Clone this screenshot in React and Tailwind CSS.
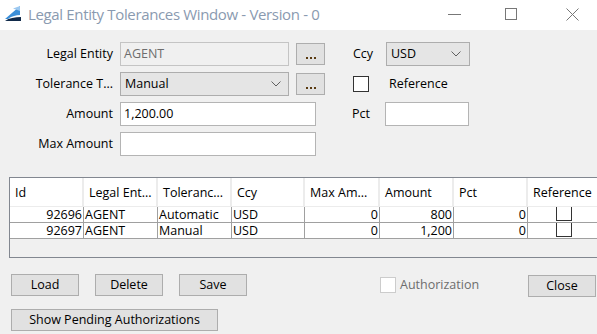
import React from "react";

const font = { fontFamily: '"Open Sans", "Noto Sans", sans-serif' };

function Chevron() {
  return (
    <svg width="10" height="6" viewBox="0 0 10 6" className="shrink-0">
      <polyline points="0.5,0.5 5,5 9.5,0.5" fill="none" stroke="#606060" strokeWidth="1" />
    </svg>
  );
}

function DotsButton() {
  return (
    <div className="ml-[7px] w-[29px] h-[22px] bg-[#e1e1e1] border border-[#adadad] flex items-end justify-center pb-[5px]">
      <div className="flex gap-[2px]">
        <div className="w-[2px] h-[2px] bg-[#5a3a10]" />
        <div className="w-[2px] h-[2px] bg-[#5a3a10]" />
        <div className="w-[2px] h-[2px] bg-[#5a3a10]" />
      </div>
    </div>
  );
}

function Btn({ children, className }) {
  return (
    <div className={"h-[22px] bg-[#e1e1e1] border border-[#adadad] flex items-center justify-center text-[12.5px] text-black " + className}>
      {children}
    </div>
  );
}

const cols = [74, 74, 74, 73, 75, 74, 74, 80];
const headers = ["Id", "Legal Ent...", "Toleranc...", "Ccy", "Max Am...", "Amount", "Pct", "Reference"];
const rows = [
  ["92696", "AGENT", "Automatic", "USD", "0", "800", "0"],
  ["92697", "AGENT", "Manual", "USD", "0", "1,200", "0"],
];
const rightAlign = [true, false, false, false, true, true, true];

export default function App() {
  return (
    <div className="w-[597px] h-[334px] overflow-hidden bg-[#f0f0f0] flex flex-col text-[12.5px] text-black" style={font}>
      {/* Title bar */}
      <div className="h-[30px] bg-white flex items-center shrink-0">
        <svg width="18" height="18" viewBox="0 0 18 18" className="ml-[4px] -mt-[2px]">
          <path d="M1 14 L16 1 L16 10 C12 10 8 11 4 14 Z" fill="#3b8fd9" />
          <path d="M9 3.5 L16 1 L16 6 Z" fill="#9cc8f0" />
          <path d="M1 16 C5 13 11 12 17 12 L17 16 Z" fill="#112a4a" />
        </svg>
        <div className="ml-[6px] -mt-[2px] text-[15px] text-[#8a9ab0] tracking-[-0.35px]">Legal Entity Tolerances Window - Version - 0</div>
        <div className="flex-1" />
        <svg width="14" height="14" viewBox="0 0 14 14" className="mr-[44px] -mt-[2px]">
          <line x1="1" y1="7.5" x2="14" y2="7.5" stroke="#777" strokeWidth="1" />
        </svg>
        <svg width="13" height="13" viewBox="0 0 13 13" className="mr-[48px] -mt-[2px]">
          <rect x="0.5" y="0.5" width="11" height="11" fill="none" stroke="#777" strokeWidth="1" />
        </svg>
        <svg width="13" height="13" viewBox="0 0 13 13" className="mr-[18px] -mt-[2px]">
          <line x1="0.5" y1="0.5" x2="12.5" y2="12.5" stroke="#777" strokeWidth="1" />
          <line x1="12.5" y1="0.5" x2="0.5" y2="12.5" stroke="#777" strokeWidth="1" />
        </svg>
      </div>

      {/* Form */}
      <div className="pt-[12px] flex flex-col gap-[6px]">
        {/* Row 1 */}
        <div className="h-[24px] flex items-center">
          <div className="w-[113px] text-right">Legal Entity</div>
          <div className="ml-[7px] w-[169px] h-[24px] bg-[#f0f0f0] border border-[#c4c4c4] flex items-center pl-[3px] text-[#6d6d6d]">AGENT</div>
          <DotsButton />
          <div className="ml-[28px] w-[33px]">Ccy</div>
          <div className="w-[84px] h-[24px] bg-[#e5e5e5] border border-[#adadad] flex items-center justify-between pl-[4px] pr-[8px]">
            <span>USD</span>
            <Chevron />
          </div>
        </div>
        {/* Row 2 */}
        <div className="h-[24px] flex items-center">
          <div className="w-[113px] text-right">Tolerance T...</div>
          <div className="ml-[7px] w-[169px] h-[24px] bg-[#e5e5e5] border border-[#adadad] flex items-center justify-between pl-[4px] pr-[7px]">
            <span>Manual</span>
            <Chevron />
          </div>
          <DotsButton />
          <div className="ml-[28px] w-[16px] h-[16px] bg-white border border-[#333]" />
          <div className="ml-[20px]">Reference</div>
        </div>
        {/* Row 3 */}
        <div className="h-[24px] flex items-center">
          <div className="w-[113px] text-right">Amount</div>
          <div className="ml-[7px] w-[196px] h-[24px] bg-white border border-[#b4b4b4] flex items-center pl-[3px]">1,200.00</div>
          <div className="ml-[36px] w-[33px]">Pct</div>
          <div className="w-[84px] h-[24px] bg-white border border-[#b4b4b4]" />
        </div>
        {/* Row 4 */}
        <div className="h-[24px] flex items-center">
          <div className="w-[113px] text-right">Max Amount</div>
          <div className="ml-[7px] w-[196px] h-[24px] bg-white border border-[#b4b4b4]" />
        </div>
      </div>

      {/* Grid */}
      <div className="mt-[21px] ml-[9px] w-[610px] h-[81px] border border-[#828790] flex flex-col shrink-0">
        <div className="h-[29px] flex bg-white border-b border-[#ececec]">
          {headers.map((h, i) => (
            <div key={i} style={{ width: cols[i] }} className="shrink-0 h-full flex items-center pt-[3px] pl-[5px] border-r-2 border-[#ececec] whitespace-nowrap">
              {h}
            </div>
          ))}
        </div>
        {rows.map((r, ri) => (
          <div key={ri} className="h-[16px] flex bg-white border-b border-[#a0a0a0]">
            {r.map((c, i) => (
              <div
                key={i}
                style={{ width: cols[i] }}
                className={"shrink-0 h-full flex items-center leading-[15px] border-r border-[#a0a0a0] " + (rightAlign[i] ? "justify-end pr-[1px]" : "pl-[1px]")}
              >
                {c}
              </div>
            ))}
            <div className="shrink-0 h-full w-[80px]">
              <div className="ml-[28px] w-[16px] h-[14px] border-l border-r border-b border-[#333]" />
            </div>
          </div>
        ))}
        <div className="flex-1 bg-[#f0f0f0]" />
      </div>

      {/* Buttons */}
      <div className="mt-[16px] flex items-start">
        <Btn className="ml-[11px] w-[68px]">Load</Btn>
        <Btn className="ml-[16px] w-[68px]">Delete</Btn>
        <Btn className="ml-[16px] w-[68px]">Save</Btn>
        <div className="ml-[133px] mt-[3px] w-[16px] h-[16px] bg-white border border-[#cccccc]" />
        <div className="ml-[4px] mt-[2px] text-[#6d6d6d]">Authorization</div>
        <Btn className="ml-[auto] mr-[1px] mt-[1px] w-[68px]">Close</Btn>
      </div>
      <div className="mt-[12px] flex">
        <Btn className="ml-[11px] w-[207px]">Show Pending Authorizations</Btn>
      </div>
    </div>
  );
}
